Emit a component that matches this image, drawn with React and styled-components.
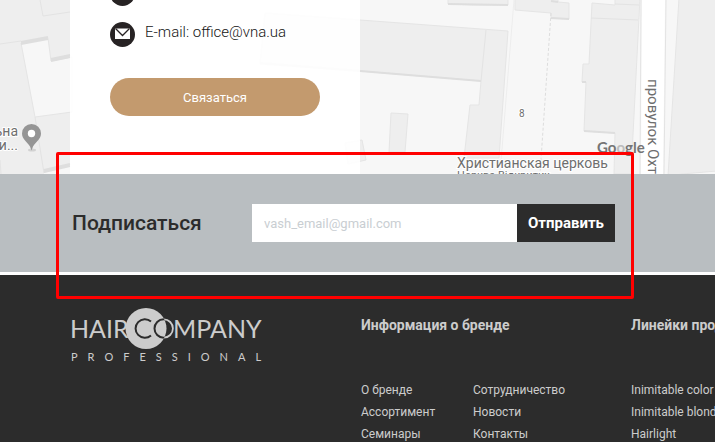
import React, { useState } from "react"
import styled, { createGlobalStyle } from "styled-components"

const BRAND_LINKS = ["О бренде", "Ассортимент", "Семинары"]
const COMPANY_LINKS = ["Сотрудничество", "Новости", "Контакты"]
const LINE_LINKS = ["Inimitable color", "Inimitable blonde", "Hairlight"]

const GlobalStyle = createGlobalStyle`
  * {
    box-sizing: border-box;
  }
  body {
    margin: 0;
    background-color: white;
    color: #2c2c2c;
    font-family: Roboto, "Liberation Sans", sans-serif;
    overflow-x: hidden;
  }
`

const MapSection = styled.section`
  position: relative;
  overflow: hidden;
  background-color: #f7f7f7;
`

const MapCanvas = styled.svg`
  position: absolute;
  top: 0;
  left: 0;
  width: 100%;
  height: 100%;
`

const ContactCard = styled.div`
  position: relative;
  width: 290px;
  margin-left: 70px;
  padding: 0 40px 58px;
  background-color: rgba(255, 255, 255, 0.9);
`

const ContactList = styled.ul`
  display: flex;
  flex-direction: column;
  gap: 16px;
  margin: -19px 0 31px;
  padding: 0;
  list-style: none;
`

const ContactItem = styled.li`
  display: flex;
  align-items: center;
  gap: 10px;
  height: 25px;
  color: #151515;
  font-size: 15px;
  line-height: 20px;
  font-weight: 300;
  white-space: nowrap;

  svg {
    flex: none;
  }
  a {
    color: inherit;
    text-decoration: none;
    padding-bottom: 5px;
  }
`

const ContactButton = styled.button`
  display: block;
  width: 100%;
  height: 38px;
  border: none;
  border-radius: 19px;
  background-color: #c39a6e;
  color: white;
  font-family: inherit;
  font-size: 13px;
  cursor: pointer;
`

const SubscribeSection = styled.section`
  position: relative;
  padding: 30px 72px;
  background-color: #b9bec1;
`

const SubscribeForm = styled.form`
  display: flex;
  align-items: center;
`

const SubscribeLabel = styled.label`
  flex: none;
  width: 180px;
  font-size: 21px;
  line-height: 38px;
  font-weight: 500;
`

const EmailInput = styled.input`
  width: 265px;
  height: 38px;
  padding: 0 12px;
  border: none;
  border-radius: 0;
  background-color: white;
  color: #2c2c2c;
  font-family: inherit;
  font-size: 13px;
  outline: none;

  &::placeholder {
    color: #c9ced2;
    opacity: 1;
  }
`

const SubmitButton = styled.button`
  flex: none;
  height: 38px;
  width: 98px;
  padding: 0;
  border: none;
  background-color: #2c2c2c;
  color: white;
  font-family: inherit;
  font-size: 15px;
  font-weight: 700;
  cursor: pointer;
`

const Highlight = styled.div`
  position: absolute;
  top: -22px;
  bottom: -27px;
  left: 56px;
  width: 578px;
  border: 3px solid #ff0000;
  border-radius: 2px;
  pointer-events: none;
`

const FooterWrapper = styled.footer`
  display: grid;
  grid-template-columns: 290px 270px auto;
  margin-top: 3px;
  padding: 31px 0 0 71px;
  overflow: hidden;
  background-color: #2c2c2c;
  color: #cccccc;
  white-space: nowrap;
`

const FooterTitle = styled.h3`
  margin: 8px 0 43px;
  font-size: 14px;
  line-height: 22px;
  font-weight: 700;
`

const LinkColumns = styled.div`
  display: flex;
`

const LinkList = styled.ul`
  width: 112px;
  margin: 0;
  padding: 0;
  list-style: none;
  font-size: 12px;
  line-height: 22px;

  a {
    color: inherit;
    text-decoration: none;
  }
`

const Building = styled.polygon`
  fill: ${({ $light }) => ($light ? "#f7f7f7" : "#eeeeee")};
  stroke: #e5e5e5;
  stroke-width: 1;
`

const Shade = styled.path`
  fill: none;
  stroke: ${({ $thin }) => ($thin ? "#e3e3e3" : "#dedede")};
  stroke-width: ${({ $thin }) => ($thin ? 1 : 2)};
`

const MapText = styled.text`
  fill: #6e6e6e;
  stroke: white;
  stroke-width: 2px;
  paint-order: stroke;
  font-size: ${({ $size }) => $size || 14}px;
`

const CityMap = () => (
  <MapCanvas viewBox="0 0 715 174" preserveAspectRatio="xMinYMin slice">
    <polygon points="0,0 70,0 70,174 0,174" fill="#eeeeee" />
    <polygon points="70,0 715,0 715,174 70,174" fill="#f7f7f7" />
    <Building $light points="21,43 48,38 51,61 72,57 72,112 35,117" />
    <polygon points="44,173 70,166 70,174 44,174" fill="#f7f7f7" />
    <Shade $thin d="M0 44 21 41M40 0 43 16 70 12M35 117 44 173M0 160 1 174" />
    <Shade d="M21 44 48 39M21 42 48 37M51 61 70 57M51 59 70 55M44 172 70 166M44 170 70 164" />

    <Building points="265,13 360,20 508,31 499,158 464,158 470,105 479,105 481,81 360,71 260,64" />
    <Shade d="M260 63 360 71 481 81" />
    <Shade $thin d="M486 30 481 81" />
    <Building points="391,113 408,114 405,152 389,152" />
    <Building points="345,143 362,140 366,160 348,164" />
    <Building points="448,-2 508,-2 508,5 475,5 448,4" />
    <Building points="515,-2 558,-2 558,2 569,3 569,19 551,18 551,13 515,10" />
    <Shade d="M448 4 508 5M551 18 569 19M551 1 558 2" />
    <path d="M514 0 500 174" stroke="#ededed" />
    <path d="M551 13 540 174" stroke="#dddddd" strokeDasharray="3 2" />
    <Building points="592,3 615,5 615,-2 640,-2 631,174 614,174 615,133 584,131 586,82 582,82 583,64 589,64" />
    <Shade $thin d="M591 18 638 20M615 4 639 5" />
    <Shade d="M582 82 586 82M584 131 615 133" />

    <polygon points="642,0 665,0 663,174 641,174" fill="white" />
    <path d="M641 0 640 174M666 0 664 174" stroke="#e3e3e3" fill="none" />
    <Building points="679,-2 717,-2 717,171 682,174 668,176" />

    <MapText x="18" y="136" textAnchor="end">
      ьна
    </MapText>
    <MapText x="18" y="150" textAnchor="end">
      ри...
    </MapText>
    <ellipse cx="32" cy="150" rx="4" ry="1.5" fill="#d2d2d2" />
    <path
      d="M31.500 124a9.500 9.500 0 0 0-9.500 9.500c0 5.500 5 8 8 13l1.500 4 1.500-4c3-5 8-7.500 8-13a9.500 9.500 0 0 0-9.500-9.500z"
      fill="#959595"
    />
    <circle cx="31.500" cy="133.500" r="3.700" fill="white" />

    <MapText x="519" y="117" $size={10}>
      8
    </MapText>
    <MapText x="457" y="179" $size={11}>
      Церква Відкритих
    </MapText>
    <MapText x="457" y="168">
      Христианская церковь
    </MapText>
    <MapText transform="translate(648 79) rotate(90)" $size={15}>
      провулок Охтирський
    </MapText>
    <text x="597" y="153" fontFamily="Lato" fontSize="15" fontWeight="700" fill="#757575">
      Go<tspan fill="#bcbcbc">o</tspan>gle
    </text>
  </MapCanvas>
)

const PhoneIcon = () => (
  <svg width="25" height="25" viewBox="0 0 25 25">
    <circle cx="12.5" cy="12.5" r="12.5" fill="#272324" />
    <path
      d="M8 6l3 3-2 2c1 2 2 3 4 4l2-2 4 3c-1 3-3 3-5 3-5-1-9-5-9-10 0-1 1-3 3-3z"
      fill="white"
    />
  </svg>
)

const MailIcon = () => (
  <svg width="25" height="25" viewBox="0 0 25 25">
    <circle cx="12.5" cy="12.5" r="12.5" fill="#272324" />
    <path d="M5 6.500h15v10.500h-15z" fill="white" />
    <path d="M5.500 6.500 12.500 13.500 19.500 6.500" fill="none" stroke="#272324" strokeWidth="1.300" />
  </svg>
)

const Logo = () => (
  <svg
    width="194"
    height="60"
    viewBox="0 0 194 60"
    fontFamily="Lato, sans-serif"
    fontSize="25"
    fill="#cccccc"
    role="img"
    aria-label="Hair Company Professional"
  >
    <defs>
      <clipPath id="logo-disc">
        <circle cx="75" cy="22.500" r="20.500" />
      </clipPath>
    </defs>
    <text x="-1" y="32">
      HAIR
    </text>
    <circle cx="75" cy="22.500" r="20.500" />
    <path d="M80 15.500A9.300 9.300 0 1 0 80 29.500" fill="none" stroke="#2c2c2c" strokeWidth="2" />
    <circle cx="92.700" cy="22.500" r="9.200" fill="none" stroke="#cccccc" strokeWidth="1.800" />
    <circle
      cx="92.700"
      cy="22.500"
      r="9.200"
      fill="none"
      stroke="#2c2c2c"
      strokeWidth="2"
      clipPath="url(#logo-disc)"
    />
    <text x="102" y="32">
      MPANY
    </text>
    <text x="0" y="55" fontSize="11" letterSpacing="10">
      PROFESSIONAL
    </text>
  </svg>
)

const FooterLinks = ({ links }) => (
  <LinkList>
    {links.map((link) => (
      <li key={link}>
        <a href="#">{link}</a>
      </li>
    ))}
  </LinkList>
)

const App = () => {
  const [email, setEmail] = useState("")

  return (
    <>
      <GlobalStyle />
      <MapSection>
        <CityMap />
        <ContactCard>
          <ContactList>
            <ContactItem>
              <PhoneIcon />
            </ContactItem>
            <ContactItem>
              <MailIcon />
              <a href="mailto:office@vna.ua">E-mail: office@vna.ua</a>
            </ContactItem>
          </ContactList>
          <ContactButton type="button">Связаться</ContactButton>
        </ContactCard>
      </MapSection>

      <SubscribeSection>
        <SubscribeForm onSubmit={(e) => e.preventDefault()}>
          <SubscribeLabel htmlFor="email">Подписаться</SubscribeLabel>
          <EmailInput
            id="email"
            type="email"
            placeholder="vash_email@gmail.com"
            value={email}
            onChange={(e) => setEmail(e.target.value)}
          />
          <SubmitButton type="submit">Отправить</SubmitButton>
        </SubscribeForm>
        <Highlight />
      </SubscribeSection>

      <FooterWrapper>
        <Logo />
        <div>
          <FooterTitle>Информация о бренде</FooterTitle>
          <LinkColumns>
            <FooterLinks links={BRAND_LINKS} />
            <FooterLinks links={COMPANY_LINKS} />
          </LinkColumns>
        </div>
        <div>
          <FooterTitle>Линейки продукции</FooterTitle>
          <FooterLinks links={LINE_LINKS} />
        </div>
      </FooterWrapper>
    </>
  )
}

export default App
